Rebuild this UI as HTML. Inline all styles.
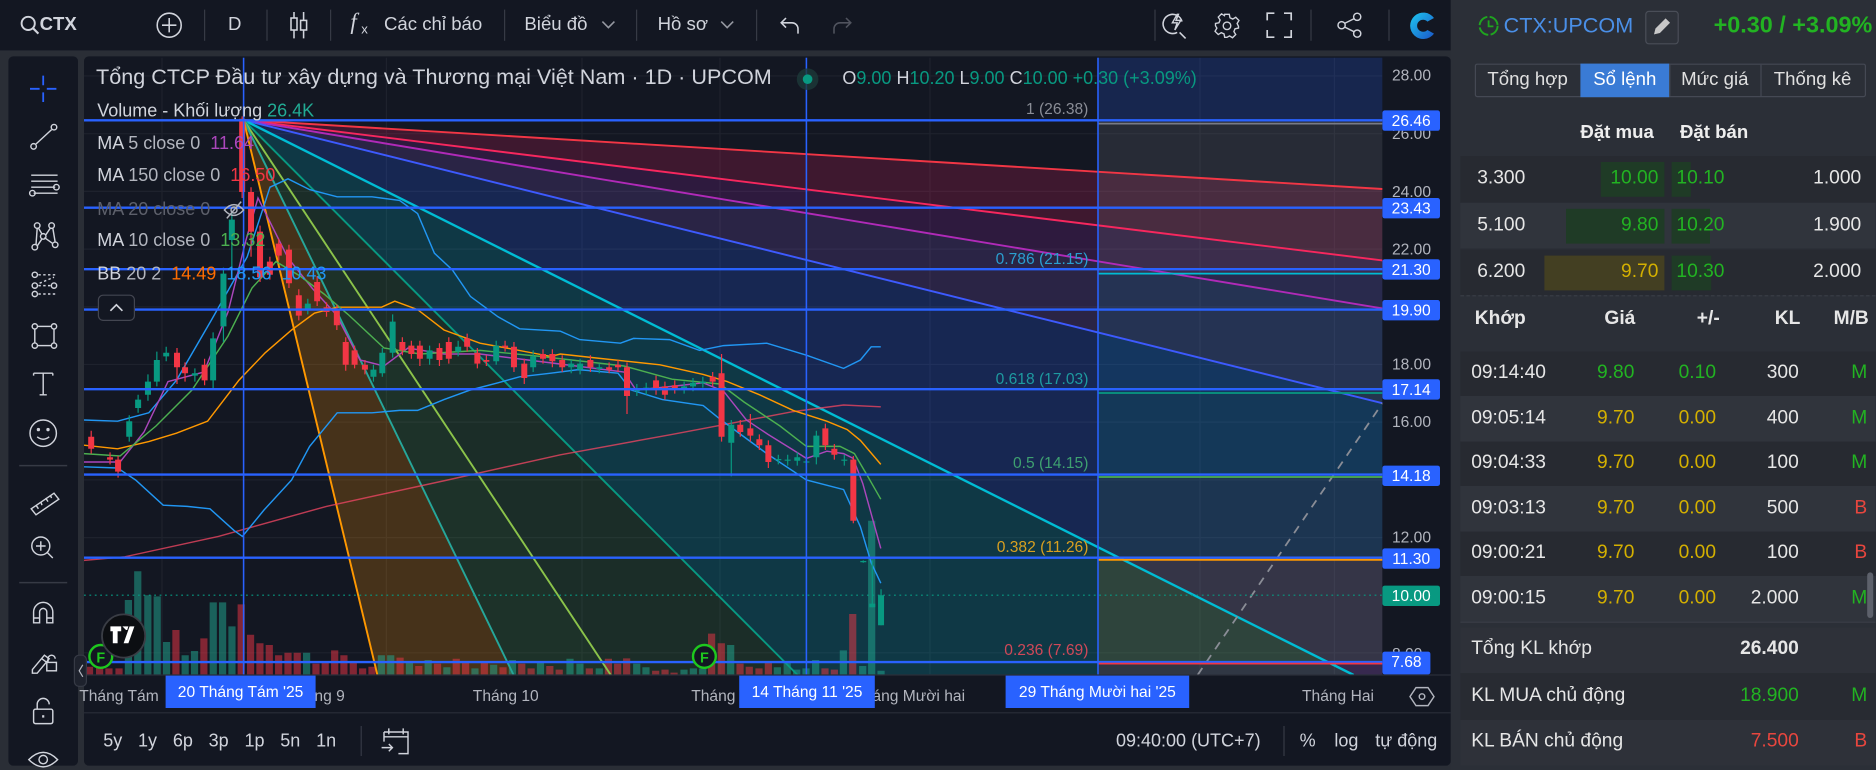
<!DOCTYPE html>
<html><head><meta charset="utf-8">
<style>
html,body{margin:0;padding:0;width:1876px;height:770px;overflow:hidden;background:#2a2e36;}
#s{position:absolute;left:0;top:0;width:1563.33px;height:641.67px;transform:scale(1.2);transform-origin:0 0;font-family:"Liberation Sans","Noto Sans CJK JP",sans-serif;color:#d1d4dc;background:#2a2e36;}
.a{position:absolute;white-space:nowrap;}
.tb{position:absolute;left:0;top:0;width:1209px;height:41.7px;background:#131722;}
.sep{position:absolute;top:8px;width:1px;height:26px;background:#363a45;}
.t15{font-size:15.5px;color:#d1d4dc;}
.lt{position:absolute;left:6.5px;top:47px;width:58.5px;height:590.5px;background:#131722;border-radius:4px;}
.cp{position:absolute;left:70px;top:47px;width:1139px;height:590.5px;background:#131722;border-radius:4px;overflow:hidden;}
.rp{position:absolute;left:1209px;top:0;width:354.33px;height:641.67px;background:#2b2f37;}
.leg{font-size:15px;color:#b2b5be;}
.px{position:absolute;left:1152px;width:48px;height:17px;background:#2962ff;color:#fff;font-size:13px;line-height:17px;text-align:center;border-radius:2px;}
.pl{position:absolute;left:1160px;font-size:13px;color:#b2b5be;}
.fl{position:absolute;font-family:"Liberation Sans",sans-serif;font-size:13px;text-align:right;width:160px;left:747px;}
.tl{position:absolute;top:572px;font-size:13px;color:#b2b5be;}
.db{position:absolute;top:562.5px;height:27.5px;background:#2962ff;color:#fff;font-size:13px;line-height:27.5px;text-align:center;}
.row{position:absolute;left:1217px;width:346.33px;}
.n{position:absolute;font-size:16px;}
.g{color:#22b322}.y{color:#d4b000}.r{color:#e8463e}.w{color:#e6e6e6}
</style></head><body><div id="s">

<div class="tb"></div>
<svg class="a" style="left:16px;top:12px" width="18" height="18" viewBox="0 0 18 18"><circle cx="7.5" cy="7.5" r="5.5" fill="none" stroke="#d1d4dc" stroke-width="1.6"/><path d="M11.5 11.5L16 16" stroke="#d1d4dc" stroke-width="1.8"/></svg>
<div class="a" style="left:33px;top:12px;font-size:15.5px;font-weight:bold;color:#d1d4dc">CTX</div>
<svg class="a" style="left:130px;top:10px" width="22" height="22"><circle cx="11" cy="11" r="10" fill="none" stroke="#d1d4dc" stroke-width="1.3"/><path d="M11 5v12M5 11h12" stroke="#d1d4dc" stroke-width="1.3"/></svg>
<div class="sep" style="left:170px"></div>
<div class="a t15" style="left:190px;top:12px">D</div>
<div class="sep" style="left:222px"></div>
<svg class="a" style="left:240px;top:9px" width="18" height="24"><path d="M5 1v22M13 1v22" stroke="#d1d4dc" stroke-width="1.3"/><rect x="2.5" y="6" width="5" height="10" fill="#131722" stroke="#d1d4dc" stroke-width="1.3"/><rect x="10.5" y="8" width="5" height="8" fill="#131722" stroke="#d1d4dc" stroke-width="1.3"/></svg>
<div class="sep" style="left:275px"></div>
<div class="a" style="left:292px;top:8px;font-size:19px;font-style:italic;font-family:'Liberation Serif',serif;color:#d1d4dc">f</div>
<div class="a" style="left:301px;top:19px;font-size:11px;color:#d1d4dc">x</div>
<div class="a t15" style="left:320px;top:12px">Các chỉ báo</div>
<div class="sep" style="left:420px"></div>
<div class="a t15" style="left:437px;top:12px">Biểu đồ</div>
<svg class="a" style="left:501px;top:17px" width="12" height="8"><path d="M1 1l5 5 5-5" fill="none" stroke="#9598a1" stroke-width="1.3"/></svg>
<div class="sep" style="left:530px"></div>
<div class="a t15" style="left:548px;top:12px">Hồ sơ</div>
<svg class="a" style="left:600px;top:17px" width="12" height="8"><path d="M1 1l5 5 5-5" fill="none" stroke="#9598a1" stroke-width="1.3"/></svg>
<div class="sep" style="left:630px"></div>
<svg class="a" style="left:650px;top:12px" width="18" height="18"><path d="M5 3L1 7l4 4M1 7h9a5 5 0 0 1 5 5v4" fill="none" stroke="#d1d4dc" stroke-width="1.3"/></svg>
<svg class="a" style="left:692px;top:12px" width="18" height="18"><path d="M13 3l4 4-4 4M17 7H8a5 5 0 0 0-5 5v4" fill="none" stroke="#50535e" stroke-width="1.3"/></svg>
<div class="sep" style="left:962px"></div>
<svg class="a" style="left:968px;top:9px" width="24" height="24"><path d="M17 9a8 8 0 1 0-4 9" fill="none" stroke="#d1d4dc" stroke-width="1.3"/><path d="M15 18l5 5" stroke="#d1d4dc" stroke-width="1.3"/><path d="M13 3l-4 7h4l-2 6 5-8h-4l2-5z" fill="none" stroke="#d1d4dc" stroke-width="1.2"/></svg>
<svg class="a" style="left:1011px;top:10px" width="23" height="23" viewBox="0 0 24 24"><path d="M10 2h4l.6 3 2.4 1.2 2.6-1.6 2.8 2.8-1.6 2.6L22 12.4 22 14l-3 .6-1 2.4 1.6 2.6-2.8 2.8-2.6-1.6L12 22h-2l-.6-3-2.4-1-2.6 1.6-2.8-2.8L3.2 14 2 12v-2l3-.6L6 7 4.4 4.4 7.2 1.6 9.8 3.2z" fill="none" stroke="#d1d4dc" stroke-width="1.2"/><circle cx="12" cy="12" r="3.3" fill="none" stroke="#d1d4dc" stroke-width="1.2"/></svg>
<svg class="a" style="left:1055px;top:10px" width="22" height="22"><path d="M1 7V1h6M15 1h6v6M21 15v6h-6M7 21H1v-6" fill="none" stroke="#d1d4dc" stroke-width="1.4"/></svg>
<div class="sep" style="left:1092px"></div>
<svg class="a" style="left:1114px;top:10px" width="22" height="22"><circle cx="17" cy="4" r="3" fill="none" stroke="#d1d4dc" stroke-width="1.2"/><circle cx="17" cy="18" r="3" fill="none" stroke="#d1d4dc" stroke-width="1.2"/><circle cx="4" cy="11" r="3" fill="none" stroke="#d1d4dc" stroke-width="1.2"/><path d="M6.5 9.5l8-4M6.5 12.5l8 4" stroke="#d1d4dc" stroke-width="1.2"/></svg>
<div class="sep" style="left:1157px"></div>
<svg class="a" style="left:1173px;top:8px" width="26" height="27" viewBox="0 0 26 27"><defs><linearGradient id="lg" x1="0" y1="0" x2="1" y2="1"><stop offset="0" stop-color="#1ec8f0"/><stop offset="1" stop-color="#1a56c8"/></linearGradient></defs><path d="M22 7A11 11 0 1 0 22 20L16.5 17A5 5 0 1 1 16.5 10Z" fill="url(#lg)"/></svg>

<div class="lt"></div>
<svg class="a" style="left:0;top:0" width="70" height="642">
<g fill="none" stroke="#d1d4dc" stroke-width="1.2">
<path d="M36 63v8M36 77v8M25 74h8M39 74h8" stroke="#2962ff" stroke-width="1.5"/>
<circle cx="28" cy="122" r="2.3"/><circle cx="45" cy="106" r="2.3"/><path d="M30 120l13-12"/>
<path d="M26 146h22M26 151h22M26 156h20M28 161h20"/><circle cx="47" cy="156" r="2.3"/><circle cx="27" cy="161" r="2.3"/>
<circle cx="29" cy="206" r="2.3"/><circle cx="31" cy="188" r="2.3"/><circle cx="36" cy="197" r="2.3"/><circle cx="43" cy="188" r="2.3"/><circle cx="46" cy="204" r="2.3"/><path d="M30 204l1-14M32 190l3 5M38 196l4-6M44 190l2 12M37 198l7 5M31 205l4-6"/>
<circle cx="29" cy="229" r="2.2"/><circle cx="29" cy="238" r="2.2"/><circle cx="29" cy="245" r="2.2"/><circle cx="45" cy="238" r="2.2"/><path d="M32 229h16M32 245h16M32 238h11M33 236l12-5" stroke-dasharray="2 2"/>
<rect x="29" y="272" width="16" height="16"/><circle cx="29" cy="272" r="2.2" fill="#131722"/><circle cx="45" cy="272" r="2.2" fill="#131722"/><circle cx="29" cy="288" r="2.2" fill="#131722"/><circle cx="45" cy="288" r="2.2" fill="#131722"/>
<path d="M28 311h16M36 311v18M33 329h6M28 311v2M44 311v2"/>
<circle cx="36" cy="361" r="11"/><circle cx="32" cy="358" r=".8" fill="#d1d4dc"/><circle cx="40" cy="358" r=".8" fill="#d1d4dc"/><path d="M31 364q5 4 10 0"/>
<path d="M16 388h40" stroke="#363a45"/>
<path d="M26 424l19-13 4 5-19 13z M30 421l2 3M34 418l1 3M38 415l2 3M42 413l1 2"/>
<circle cx="34" cy="455" r="7.5"/><path d="M34 451v8M30 455h8M39.5 460.5l4.5 4.5"/>
<path d="M16 485.5h40" stroke="#363a45"/>
<path d="M28 519v-9a8 8 0 0 1 16 0v9h-5v-9a3 3 0 0 0-6 0v9zM28 515h5M39 515h5"/>
<path d="M27 558l10-12 4 3-10 12h-4zM35 549l4 3"/><rect x="39" y="552" width="8" height="7"/><path d="M40 552v-3a3 3 0 0 1 6 0"/>
<rect x="28" y="591" width="16" height="12" rx="1.5"/><path d="M31 591v-4a5 5 0 0 1 10 0"/><path d="M36 596v2" stroke-width="1.8"/>
<path d="M24 633q12-12 24 0q-12 12-24 0z"/><circle cx="36" cy="633" r="3.5"/>
</g></svg>

<div class="cp"></div>
<svg class="a" style="left:0;top:0" width="1563" height="642" viewBox="0 0 1563 642">
<defs><clipPath id="pc"><rect x="70" y="48" width="1082" height="514.5"/></clipPath></defs>
<g clip-path="url(#pc)">
<g stroke="#1e222d" stroke-width="1">
<path d="M70 63.3H1152M70 111.4H1152M70 159.5H1152M70 207.6H1152M70 255.7H1152M70 303.7H1152M70 351.8H1152M70 399.9H1152M70 448H1152M70 544H1152"/>
<path d="M135 48V562M322 48V562M485 48V562M600 48V562M775 48V562M1000 48V562M1112 48V562"/>
</g>
<polygon points="203,100 314.5,562.5 428,562.5" fill="#ff9800" fill-opacity="0.22"/>
<polygon points="203,100 428,562.5 509,562.5" fill="#4caf50" fill-opacity="0.18"/>
<polygon points="203,100 509,562.5 664.7,562.5" fill="#4caf50" fill-opacity="0.15"/>
<polygon points="203,100 664.7,562.5 1128,562.5" fill="#00bcd4" fill-opacity="0.2"/>
<polygon points="203,100 1128,562.5 1152,562.5 1152,336" fill="#2962ff" fill-opacity="0.22"/>
<polygon points="203,100 1152,336 1152,257" fill="#7e57c2" fill-opacity="0.22"/>
<polygon points="203,100 1152,257 1152,217" fill="#9c27b0" fill-opacity="0.2"/>
<polygon points="203,100 1152,217 1152,157.5" fill="#e91e63" fill-opacity="0.2"/>
<rect x="915" y="48" width="237" height="52" fill="#2962ff" fill-opacity="0.2"/>
<rect x="915" y="100" width="237" height="128" fill="#787b86" fill-opacity="0.2"/>
<rect x="915" y="228" width="237" height="99" fill="#00bcd4" fill-opacity="0.1"/>
<rect x="915" y="327" width="237" height="69.5" fill="#089981" fill-opacity="0.15"/>
<rect x="915" y="396.5" width="237" height="69.2" fill="#4caf50" fill-opacity="0.1"/>
<rect x="915" y="465.7" width="237" height="85.8" fill="#ff9800" fill-opacity="0.13"/>
<rect x="915" y="551.5" width="237" height="11" fill="#f23645" fill-opacity="0.15"/>
<path fill="rgba(34,171,148,0.5)" d="M104 500h6V562.5h-6zM111.8 476h6V562.5h-6zM120.2 496h6V562.5h-6zM128 497h6V562.5h-6zM135.8 535h6V562.5h-6zM151.3 546h6V562.5h-6zM159.1 542.5h6V562.5h-6zM174.7 502h6V562.5h-6zM182.5 502h6V562.5h-6zM190.3 522h6V562.5h-6zM252.5 544h6V562.5h-6zM314.8 546h6V562.5h-6zM322.6 546h6V562.5h-6zM338.2 552h6V562.5h-6zM353.8 550h6V562.5h-6zM369.4 556h6V562.5h-6zM392.8 557h6V562.5h-6zM408.4 554h6V562.5h-6zM424 550h6V562.5h-6zM447.4 552h6V562.5h-6zM472 549h6V562.5h-6zM480.3 553h6V562.5h-6zM496.4 557h6V562.5h-6zM527.6 553h6V562.5h-6zM535.3 556h6V562.5h-6zM567 558h6V562.5h-6zM574.8 557h6V562.5h-6zM582.6 557h6V562.5h-6zM605.9 537.5h6V562.5h-6zM644.8 556h6V562.5h-6zM653 551h6V562.5h-6zM660.9 558h6V562.5h-6zM668.7 557h6V562.5h-6zM676.7 550h6V562.5h-6zM699.8 542h6V562.5h-6zM715.9 555h6V562.5h-6zM723.4 434h6V562.5h-6zM731.2 559h6V562.5h-6z"/>
<path fill="rgba(242,54,69,0.5)" d="M71.6 555.6h6V562.5h-6zM80 551h6V562.5h-6zM87.8 557h6V562.5h-6zM96.2 557h6V562.5h-6zM143.6 525h6V562.5h-6zM166.9 532h6V562.5h-6zM198 503.6h6V562.5h-6zM205.8 529h6V562.5h-6zM213.6 536h6V562.5h-6zM221.4 537.5h6V562.5h-6zM229.2 546h6V562.5h-6zM237 544h6V562.5h-6zM244.7 544h6V562.5h-6zM260.3 553h6V562.5h-6zM268 551h6V562.5h-6zM275.9 542h6V562.5h-6zM283.6 546h6V562.5h-6zM291.4 551h6V562.5h-6zM299.2 557h6V562.5h-6zM307 555.6h6V562.5h-6zM330.4 548h6V562.5h-6zM346 555h6V562.5h-6zM361.6 553h6V562.5h-6zM377.2 549h6V562.5h-6zM385 552h6V562.5h-6zM400.6 551h6V562.5h-6zM416.2 556h6V562.5h-6zM431.8 553h6V562.5h-6zM439.6 557h6V562.5h-6zM455.2 555h6V562.5h-6zM463 558h6V562.5h-6zM488.1 557h6V562.5h-6zM504 549h6V562.5h-6zM511.7 553h6V562.5h-6zM519.2 548.6h6V562.5h-6zM543.4 559h6V562.5h-6zM551.2 558h6V562.5h-6zM558.7 560.5h6V562.5h-6zM590 528h6V562.5h-6zM598.1 536h6V562.5h-6zM613.7 553h6V562.5h-6zM621.4 555.6h6V562.5h-6zM629.5 557h6V562.5h-6zM637.3 551h6V562.5h-6zM684.5 557h6V562.5h-6zM692.3 558h6V562.5h-6zM707.6 511.7h6V562.5h-6z"/>
<g stroke-width="1.6" fill="none">
<path d="M203 100L1152 157.5" stroke="#f23645"/>
<path d="M203 100L1152 217" stroke="#f7275e"/>
<path d="M203 100L1152 257" stroke="#b02ab8"/>
<path d="M203 100L1152 336" stroke="#3d5afe"/>
<path d="M203 100L1128 562.5" stroke="#00bcd4" stroke-width="2"/>
<path d="M203 100L664.7 562.5" stroke="#089981"/>
<path d="M203 100L509 562.5" stroke="#8bc34a"/>
<path d="M203 100L428 562.5" stroke="#26a69a"/>
<path d="M203 100L314.5 562.5" stroke="#ff9800"/>
</g>
<path d="M998 562.5L1152 336" stroke="#8a8d96" stroke-width="1.5" stroke-dasharray="7 6"/>
<g fill="none" stroke-width="1.2">
<polyline stroke="#e94560" stroke-opacity="0.8" points="70,467 104,464 182,447 272,422 373,400 467,379 560,362 661,343 703,337.5 734,339"/>
<polyline stroke="#2196f3" points="70,350 98,351 124,344 147,317 176,267 206,214 225,156 240,149 258,158 281,164 310,164 333,167 348,178 362,211 377,225 392,247 415,264 433,274 467,276 483,283 517,286 528,282 558,283 583,292 603,288 639,286 672,296 703,307 717,300 726,289 734,289"/>
<polyline stroke="#2196f3" points="70,389 98,390 113,400 136,421 156,422 175,424 195,442 202,447 220,425 243,400 258,372 281,344 310,344 333,342 348,342 370,333 392,325 415,319 433,314 459,311 482,308 515,311 526,325 552,333 586,338 601,350 639,378 672,400 703,408 717,439 726,469 734,486"/>
<polyline stroke="#ff9800" points="70,371 98,374 124,368 147,361 173,351 199,317 221,294 243,275 262,261 281,256 318,256 329,251 348,258 370,275 400,286 422,290 459,297 467,295 494,298 522,301 550,304 586,312 606,318 633,329 661,342 689,351 706,358 717,367 734,387"/>
<polyline stroke="#ab47bc" points="70,385 100,385 120,360 140,318 170,310 190,260 205,200 215,165 225,185 240,215 260,240 280,262 300,300 320,305 340,290 370,295 400,295 440,300 480,305 520,310 530,325 560,322 586,319 603,326 622,350 640,362 661,375 672,382 689,376 703,378 711,382 719,403 734,457"/>
<polyline stroke="#4caf50" points="70,378 100,380 130,355 160,325 190,280 210,240 230,218 250,230 270,245 290,262 320,290 350,295 400,292 450,297 520,305 560,316 600,320 620,335 650,355 672,372 700,372 712,378 722,395 734,416"/>
</g>
<path stroke="#089981" stroke-width="1" d="M107.7 346V368M115.1 329V344M123.3 312V334M130.7 293V322M138.5 289V301M162.4 307V318M177.6 277V325M186.2 223V285M193.2 178V228M256.5 249V262M311.2 304V318M318.6 290V314M327.2 262V298M358 288V304M381.8 284V297M413.5 284V304M444.3 292V310M476 300V311M483.4 299V312M499.4 303V311M530.7 320V330M538.5 319V329M570.1 318V328M577.5 315V326M585.7 314V323M609.4 350V397M648.6 379V387M656.4 379V388M664.4 377V388M672 381V389M680.3 359V387M703.6 379V388M719.4 467V469M726.9 467V506M734.2 491V521"/>
<path stroke="#f23645" stroke-width="1" d="M76 359V378M91.7 377V387M98.4 380V398M147.5 290V320M154.2 302V318M170.5 299V321M201.8 97V165M209.2 156V214M216.7 188V235M224.9 214V233M232.3 199V217M240.8 204V240M249 241V267M264.3 230V255M272.1 252V264M280.7 254V275M288.1 281V309M295.5 288V307M304.1 300V312M335.3 281V296M342.8 284V299M349.9 284V305M366.2 286V305M374 281V303M389.3 278V293M397.8 290V307M405.3 296V305M420.9 284V293M428.3 285V310M436.9 299V320M452.5 291V303M460.3 291V306M468.5 296V310M492 296V310M507.6 302V311M515 300V310M522.5 302V345M546.7 313V329M554.1 318V333M562.3 317V328M593.9 310V322M601.3 295V368M616.9 350V364M625.3 345V368M632.8 362V375M640.3 367V390M687.8 353V375M695.3 370V383M711.1 380V436"/>
<path fill="#089981" d="M105.2 351h5v13h-5zM112.6 333h5v7h-5zM120.8 318h5v11h-5zM128.2 300h5v18h-5zM136 294h5v3h-5zM159.9 311h5v2h-5zM175.1 282h5v35h-5zM183.7 228h5v44h-5zM190.7 183h5v17h-5zM254 253h5v5h-5zM308.7 308h5v6h-5zM316.1 294h5v17h-5zM324.7 268h5v26h-5zM355.5 292h5v7h-5zM379.3 289h5v4h-5zM411 288h5v13h-5zM441.8 297h5v9h-5zM473.5 303h5v3h-5zM480.9 303h5v5h-5zM496.9 306h5v1.5h-5zM528.2 324h5v2h-5zM536 323h5v2h-5zM567.6 322h5v2h-5zM575 319h5v3h-5zM583.2 318h5v1.5h-5zM606.9 354h5v15h-5zM646.1 382.5h5v1h-5zM653.9 383h5v1h-5zM661.9 381h5v3h-5zM669.5 384.5h5v1h-5zM677.8 363h5v18h-5zM701.1 383h5v1h-5zM716.9 467.5h5v1h-5zM724.4 503h5v3h-5zM731.7 496h5v25h-5z"/>
<path fill="#f23645" d="M73.5 364h5v10h-5zM89.2 381h5v2h-5zM95.9 383h5v10h-5zM145 294h5v12h-5zM151.7 306h5v5h-5zM168 304h5v13h-5zM199.3 99h5v61h-5zM206.7 160h5v33h-5zM214.2 193h5v38h-5zM222.4 218h5v11h-5zM229.8 203h5v10h-5zM238.3 208h5v28h-5zM246.5 246h5v17h-5zM261.8 235h5v16h-5zM269.6 256h5v4h-5zM278.2 258h5v13h-5zM285.6 285h5v19h-5zM293 292h5v12h-5zM301.6 304h5v4h-5zM332.8 285h5v7h-5zM340.3 288h5v7h-5zM347.4 288h5v11h-5zM363.7 290h5v10h-5zM371.5 285h5v14h-5zM386.8 282h5v7h-5zM395.3 294h5v9h-5zM402.8 300h5v1.5h-5zM418.4 288h5v1.5h-5zM425.8 289h5v17h-5zM434.4 303h5v12h-5zM450 295h5v4h-5zM457.8 295h5v6h-5zM466 300h5v6h-5zM489.5 300h5v6h-5zM505.1 306h5v2h-5zM512.5 304h5v2h-5zM520 306h5v24h-5zM544.2 317h5v8h-5zM551.6 322h5v7h-5zM559.8 321h5v3h-5zM591.4 314h5v4h-5zM598.8 311h5v53h-5zM614.4 354h5v6h-5zM622.8 357h5v6h-5zM630.3 366h5v5h-5zM637.8 371h5v14h-5zM685.3 357h5v14h-5zM692.8 374h5v5h-5zM708.6 383h5v51h-5z"/>
<path d="M70 496H1152" stroke="#089981" stroke-width="1" stroke-dasharray="1.5 3"/>
<g stroke="#2962ff" stroke-width="2">
<path d="M70 100.3H1152M70 173.1H1152M70 224.3H1152M70 258H1152M70 324.3H1152M70 395.5H1152M70 464.7H1152M70 551.7H1152"/>
</g>
<g stroke-width="1.5">
<path d="M915 103H1152" stroke="#787b86"/>
<path d="M915 228H1152" stroke="#00bcd4"/>
<path d="M915 327.5H1152" stroke="#089981"/>
<path d="M915 397.5H1152" stroke="#4caf50"/>
<path d="M915 466.5H1152" stroke="#ff9800"/>
<path d="M915 553H1152" stroke="#f23645"/>
</g>
<path d="M203 48V562.5M672 48V562.5M915 48V562.5" stroke="#2962ff" stroke-width="1.3"/>
<circle cx="84" cy="547" r="9.5" fill="#131722" stroke="#1ec81e" stroke-width="2"/>
<text x="84" y="552" font-size="12" font-weight="bold" fill="#1ec81e" text-anchor="middle" font-family="Liberation Sans">F</text>
<circle cx="587" cy="547" r="9.5" fill="#131722" stroke="#1ec81e" stroke-width="2"/>
<text x="587" y="552" font-size="12" font-weight="bold" fill="#1ec81e" text-anchor="middle" font-family="Liberation Sans">F</text>
<circle cx="103" cy="530" r="18" fill="#0c0e12" stroke="#3a3d45" stroke-width="1.5"/>
<path d="M92 522h9v4h-3v10h-4v-10h-2zM102 522h5l-1 3h-1zM108 522h4l-5 14h-4z" fill="#fff"/>
</g>
<path d="M70 562.5H1209" stroke="#2a2e39" stroke-width="1"/>
<path d="M70 594H1209" stroke="#2a2e39" stroke-width="1"/>
<path d="M301 605V630M1070 605V630" stroke="#363a45" stroke-width="1"/>
<path d="M1180 573h10l5 7.5-5 7.5h-10l-5-7.5z" fill="none" stroke="#b2b5be" stroke-width="1.2"/><circle cx="1185" cy="580.5" r="2.3" fill="none" stroke="#b2b5be" stroke-width="1.2"/>
<path d="M320 610h20v18h-8M320 610v8M324 607v5M336 607v5M320 614h20M318 623h9M324 620l3 3-3 3" fill="none" stroke="#d1d4dc" stroke-width="1.2"/>
<rect x="82" y="246" width="30" height="21" rx="4" fill="#131722" stroke="#434651"/>
<path d="M92 259l5-5 5 5" fill="none" stroke="#d1d4dc" stroke-width="1.4"/>
<rect x="62" y="546" width="10" height="26" rx="4" fill="#1e222d" stroke="#363a45"/>
<path d="M69 554l-3 5 3 5" fill="none" stroke="#b2b5be"/>
<g fill="none" stroke="#b2b5be" stroke-width="1.2"><path d="M187 175q8-9 16 0q-8 9-16 0z"/><circle cx="195" cy="175" r="2.5"/><path d="M189 182l12-14"/></g>
<circle cx="673" cy="66" r="9" fill="#1d3a3a" fill-opacity="0.8"/><circle cx="673" cy="66" r="4" fill="#089981"/>
</svg>

<div class="a" style="left:80px;top:54px;font-size:18px;color:#d1d4dc">Tổng CTCP Đầu tư xây dựng và Thương mại Việt Nam · 1D · UPCOM</div>
<div class="a" style="left:702px;top:57px;font-size:15px;color:#d1d4dc">O<span style="color:#089981">9.00</span> H<span style="color:#089981">10.20</span> L<span style="color:#089981">9.00</span> C<span style="color:#089981">10.00</span> <span style="color:#089981">+0.30 (+3.09%)</span></div>
<div class="a leg" style="left:81px;top:84px;color:#d1d4dc">Volume - Khối lượng <span style="color:#22ab94">26.4K</span></div>
<div class="a leg" style="left:81px;top:111px"><span style="color:#d1d4dc">MA</span> 5 close 0 &nbsp;<span style="color:#ab47bc">11.64</span></div>
<div class="a leg" style="left:81px;top:138px"><span style="color:#d1d4dc">MA</span> 150 close 0 &nbsp;<span style="color:#f23645">16.50</span></div>
<div class="a leg" style="left:81px;top:166px;color:#5d606b">MA 20 close 0</div>
<div class="a leg" style="left:81px;top:192px"><span style="color:#d1d4dc">MA</span> 10 close 0 &nbsp;<span style="color:#4caf50">13.32</span></div>
<div class="a leg" style="left:81px;top:220px"><span style="color:#d1d4dc">BB</span> 20 2 &nbsp;<span style="color:#ff6d00">14.49</span> &nbsp;<span style="color:#2196f3">18.56</span> &nbsp;<span style="color:#2196f3">10.43</span></div>

<div class="fl" style="top:83px;color:#8a8d96">1 (26.38)</div>
<div class="fl" style="top:208px;color:#2a9fd0">0.786 (21.15)</div>
<div class="fl" style="top:308px;color:#1e9aa0">0.618 (17.03)</div>
<div class="fl" style="top:378px;color:#3ea070">0.5 (14.15)</div>
<div class="fl" style="top:448px;color:#d9a020">0.382 (11.26)</div>
<div class="fl" style="top:534px;color:#d04858">0.236 (7.69)</div>

<div class="pl" style="top:55px">28.00</div>
<div class="pl" style="top:104px">26.00</div>
<div class="pl" style="top:152px">24.00</div>
<div class="pl" style="top:200px">22.00</div>
<div class="pl" style="top:296px">18.00</div>
<div class="pl" style="top:344px">16.00</div>
<div class="pl" style="top:440px">12.00</div>
<div class="pl" style="top:537px">8.00</div>
<div class="px" style="top:92px">26.46</div>
<div class="px" style="top:165px">23.43</div>
<div class="px" style="top:216px">21.30</div>
<div class="px" style="top:250px">19.90</div>
<div class="px" style="top:316px">17.14</div>
<div class="px" style="top:388px">14.18</div>
<div class="px" style="top:457px">11.30</div>
<div class="px" style="top:488px;background:#089981">10.00</div>
<div class="px" style="top:543px;width:40px;height:19px">7.68</div>

<div class="tl" style="left:66px">Tháng Tám</div>
<div class="tl" style="left:262px">ng 9</div>
<div class="tl" style="left:394px">Tháng 10</div>
<div class="tl" style="left:576px">Tháng</div>
<div class="tl" style="left:727px">áng Mười hai</div>
<div class="tl" style="left:1085px">Tháng Hai</div>
<div class="db" style="left:138px;width:125px">20 Tháng Tám '25</div>
<div class="db" style="left:616px;width:113px">14 Tháng 11 '25</div>
<div class="db" style="left:838px;width:153px">29 Tháng Mười hai '25</div>

<div class="a" style="left:86px;top:609px;font-size:15px;color:#d1d4dc;word-spacing:9px">5y 1y 6p 3p 1p 5n 1n</div>
<div class="a" style="left:930px;top:609px;font-size:15px;color:#d1d4dc">09:40:00 (UTC+7)</div>
<div class="a" style="left:1083px;top:609px;font-size:15px;color:#d1d4dc">%</div>
<div class="a" style="left:1112px;top:609px;font-size:15px;color:#d1d4dc">log</div>
<div class="a" style="left:1146px;top:609px;font-size:15px;color:#d1d4dc">tự động</div>

<div class="rp"></div>
<svg class="a" style="left:1231px;top:12px" width="19" height="19"><circle cx="9.5" cy="9.5" r="7.5" fill="none" stroke="#1fa51f" stroke-width="1.6" stroke-dasharray="10 2"/><path d="M9.5 5v5h4" fill="none" stroke="#1fa51f" stroke-width="1.5"/></svg>
<div class="a" style="left:1253px;top:11px;font-size:18px;color:#4a8fe7">CTX:UPCOM</div>
<div class="a" style="left:1371px;top:9px;width:26px;height:26px;border:1px solid #4a4e58;border-radius:3px;background:#2e323a"></div>
<svg class="a" style="left:1376px;top:13px" width="18" height="18"><path d="M3 15l1-4 8-8 3 3-8 8zM11 4l3 3" fill="#c8c8c8" stroke="#c8c8c8" stroke-width="1"/></svg>
<div class="a" style="left:1428px;top:10px;font-size:19.5px;font-weight:bold;color:#22b322">+0.30 / +3.09%</div>

<div class="a" style="left:1229px;top:53px;width:324px;height:26px;border:1px solid #454954;border-radius:2px;background:#2b2f37"></div>
<div class="a" style="left:1317px;top:53px;width:74px;height:28px;background:#3a7bd5"></div>
<div class="a" style="left:1391px;top:54px;width:1px;height:26px;background:#454954"></div>
<div class="a" style="left:1467px;top:54px;width:1px;height:26px;background:#454954"></div>
<div class="a" style="left:1229px;top:58px;width:88px;text-align:center;font-size:15.5px;color:#e0e0e0">Tổng hợp</div>
<div class="a" style="left:1317px;top:58px;width:74px;text-align:center;font-size:15.5px;color:#fff">Sổ lệnh</div>
<div class="a" style="left:1391px;top:58px;width:76px;text-align:center;font-size:15.5px;color:#e0e0e0">Mức giá</div>
<div class="a" style="left:1467px;top:58px;width:87px;text-align:center;font-size:15.5px;color:#e0e0e0">Thống kê</div>

<div class="a" style="left:1317px;top:102px;font-size:15.5px;font-weight:bold;color:#eee">Đặt mua</div>
<div class="a" style="left:1400px;top:102px;font-size:15.5px;font-weight:bold;color:#eee">Đặt bán</div>

<div class="row" style="top:130px;height:38.6px;background:#272a31"></div>
<div class="row" style="top:168.6px;height:38.9px;background:#30343c"></div>
<div class="row" style="top:207.5px;height:38.9px;background:#272a31"></div>
<div class="a" style="left:1217px;top:246px;width:346px;border-top:1px dashed #3a3e47"></div>
<div class="a" style="left:1334px;top:135px;width:53px;height:29px;background:#1f3b26"></div>
<div class="a" style="left:1393px;top:135px;width:16px;height:29px;background:#1f3b26"></div>
<div class="a" style="left:1305px;top:174px;width:82px;height:29px;background:#1f3b26"></div>
<div class="a" style="left:1393px;top:174px;width:32px;height:29px;background:#1f3b26"></div>
<div class="a" style="left:1287px;top:213px;width:100px;height:29px;background:#433f22"></div>
<div class="a" style="left:1393px;top:213px;width:33px;height:29px;background:#1f3b26"></div>
<div class="n w" style="left:1231px;top:140px">3.300</div>
<div class="n g" style="left:1300px;top:140px;width:82px;text-align:right">10.00</div>
<div class="n g" style="left:1397px;top:140px">10.10</div>
<div class="n w" style="left:1470px;top:140px;width:81px;text-align:right">1.000</div>
<div class="n w" style="left:1231px;top:179px">5.100</div>
<div class="n g" style="left:1300px;top:179px;width:82px;text-align:right">9.80</div>
<div class="n g" style="left:1397px;top:179px">10.20</div>
<div class="n w" style="left:1470px;top:179px;width:81px;text-align:right">1.900</div>
<div class="n w" style="left:1231px;top:218px">6.200</div>
<div class="n y" style="left:1300px;top:218px;width:82px;text-align:right">9.70</div>
<div class="n g" style="left:1397px;top:218px">10.30</div>
<div class="n w" style="left:1470px;top:218px;width:81px;text-align:right">2.000</div>

<div class="n w" style="left:1229px;top:257px;font-weight:bold">Khớp</div>
<div class="n w" style="left:1337px;top:257px;font-weight:bold">Giá</div>
<div class="n w" style="left:1414px;top:257px;font-weight:bold">+/-</div>
<div class="n w" style="left:1479px;top:257px;font-weight:bold">KL</div>
<div class="n w" style="left:1528px;top:257px;font-weight:bold">M/B</div>

<div class="row" style="top:292.5px;height:37.5px;background:#272a31"></div>
<div class="row" style="top:330px;height:37.5px;background:#30343c"></div>
<div class="row" style="top:367.5px;height:37.5px;background:#272a31"></div>
<div class="row" style="top:405px;height:37.5px;background:#30343c"></div>
<div class="row" style="top:442.5px;height:37.5px;background:#272a31"></div>
<div class="row" style="top:480px;height:37.5px;background:#30343c"></div>

<div class="n w" style="left:1226px;top:302px">09:14:40</div><div class="n g" style="left:1300px;top:302px;width:62px;text-align:right">9.80</div><div class="n g" style="left:1370px;top:302px;width:60px;text-align:right">0.10</div><div class="n w" style="left:1440px;top:302px;width:59px;text-align:right">300</div><div class="n g" style="left:1530px;top:302px;width:26px;text-align:right">M</div>
<div class="n w" style="left:1226px;top:339.5px">09:05:14</div><div class="n y" style="left:1300px;top:339.5px;width:62px;text-align:right">9.70</div><div class="n y" style="left:1370px;top:339.5px;width:60px;text-align:right">0.00</div><div class="n w" style="left:1440px;top:339.5px;width:59px;text-align:right">400</div><div class="n g" style="left:1530px;top:339.5px;width:26px;text-align:right">M</div>
<div class="n w" style="left:1226px;top:377px">09:04:33</div><div class="n y" style="left:1300px;top:377px;width:62px;text-align:right">9.70</div><div class="n y" style="left:1370px;top:377px;width:60px;text-align:right">0.00</div><div class="n w" style="left:1440px;top:377px;width:59px;text-align:right">100</div><div class="n g" style="left:1530px;top:377px;width:26px;text-align:right">M</div>
<div class="n w" style="left:1226px;top:414.5px">09:03:13</div><div class="n y" style="left:1300px;top:414.5px;width:62px;text-align:right">9.70</div><div class="n y" style="left:1370px;top:414.5px;width:60px;text-align:right">0.00</div><div class="n w" style="left:1440px;top:414.5px;width:59px;text-align:right">500</div><div class="n r" style="left:1530px;top:414.5px;width:26px;text-align:right">B</div>
<div class="n w" style="left:1226px;top:452px">09:00:21</div><div class="n y" style="left:1300px;top:452px;width:62px;text-align:right">9.70</div><div class="n y" style="left:1370px;top:452px;width:60px;text-align:right">0.00</div><div class="n w" style="left:1440px;top:452px;width:59px;text-align:right">100</div><div class="n r" style="left:1530px;top:452px;width:26px;text-align:right">B</div>
<div class="n w" style="left:1226px;top:489.5px">09:00:15</div><div class="n y" style="left:1300px;top:489.5px;width:62px;text-align:right">9.70</div><div class="n y" style="left:1370px;top:489.5px;width:60px;text-align:right">0.00</div><div class="n w" style="left:1440px;top:489.5px;width:59px;text-align:right">2.000</div><div class="n g" style="left:1530px;top:489.5px;width:26px;text-align:right">M</div>
<div class="a" style="left:1556px;top:477px;width:5px;height:38px;border-radius:3px;background:#5d616b"></div>
<div class="a" style="left:1217px;top:518px;width:346px;height:1px;background:#3a3e47"></div>

<div class="row" style="top:522.5px;height:38.5px;background:#2e3139"></div>
<div class="row" style="top:561px;height:38.5px;background:#282b32"></div>
<div class="row" style="top:599.5px;height:38px;background:#2e3139"></div>
<div class="n w" style="left:1226px;top:532px">Tổng KL khớp</div>
<div class="n w" style="left:1400px;top:532px;width:99px;text-align:right;font-weight:bold">26.400</div>
<div class="n w" style="left:1226px;top:570.5px">KL MUA chủ động</div>
<div class="n g" style="left:1400px;top:570.5px;width:99px;text-align:right">18.900</div>
<div class="n g" style="left:1530px;top:570.5px;width:26px;text-align:right">M</div>
<div class="n w" style="left:1226px;top:609px">KL BÁN chủ động</div>
<div class="n r" style="left:1400px;top:609px;width:99px;text-align:right">7.500</div>
<div class="n r" style="left:1530px;top:609px;width:26px;text-align:right">B</div>

</div></body></html>
